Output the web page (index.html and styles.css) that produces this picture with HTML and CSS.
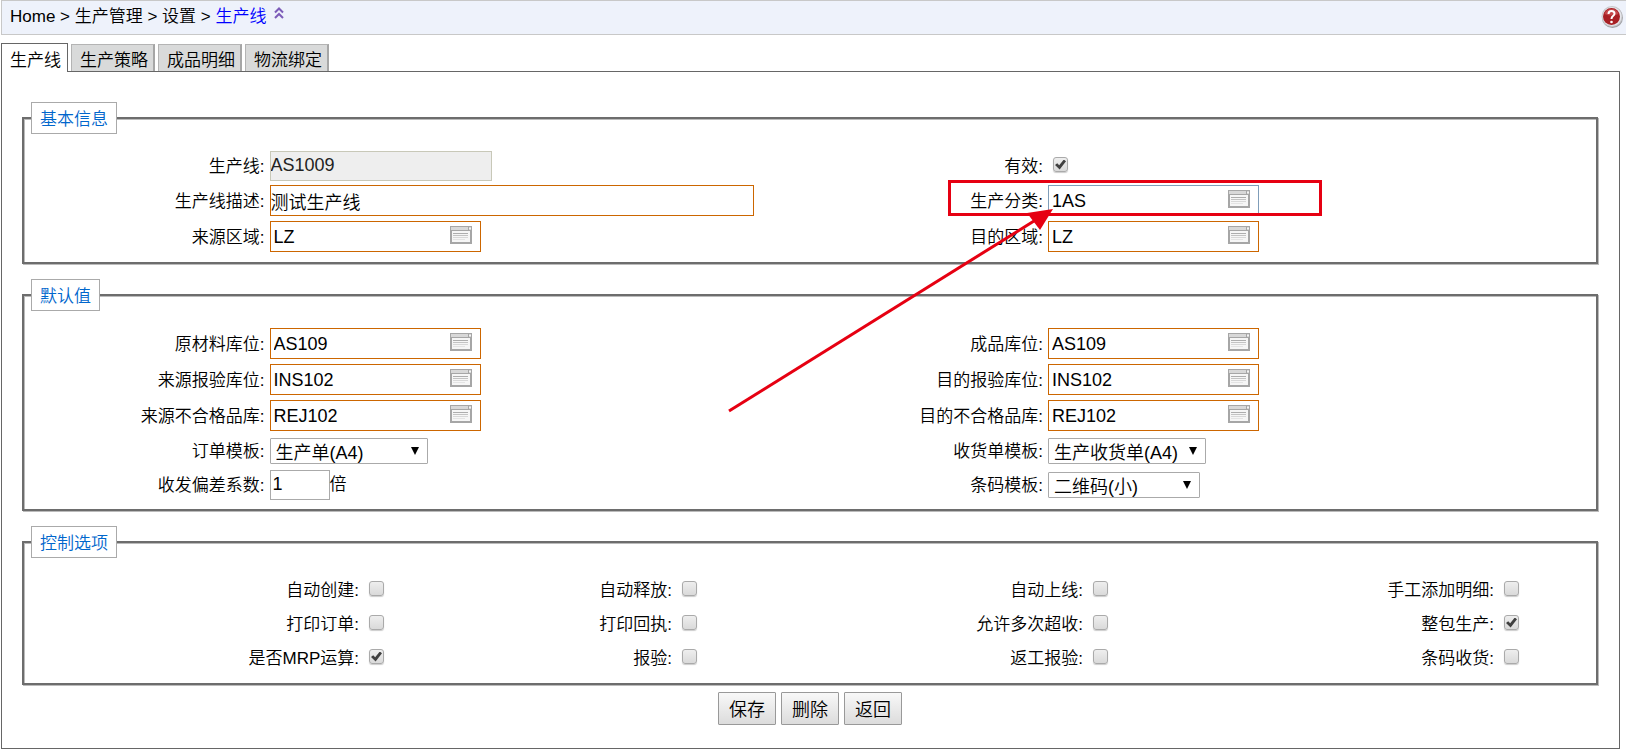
FILE: index.html
```html
<!DOCTYPE html>
<html lang="zh-CN">
<head>
<meta charset="utf-8">
<title>生产线</title>
<link rel="stylesheet" href="styles.css">
</head>
<body>
<svg class="symbols" aria-hidden="true">
  <symbol id="picker" viewBox="0 0 22 18">
    <rect x="0" y="0" width="22" height="18" fill="#a6a6a6"/>
    <rect x="1" y="1" width="20" height="3" fill="#d8d8d8"/>
    <rect x="18" y="1" width="1" height="3" fill="#a6a6a6"/>
    <rect x="19" y="2" width="2" height="1" fill="#f4f4f4"/>
    <rect x="2" y="5" width="18" height="11" fill="#f6f6f6"/>
    <rect x="3" y="7" width="15" height="1" fill="#adadad"/>
    <rect x="3" y="9" width="15" height="1" fill="#c3c3c3"/>
    <rect x="3" y="11" width="15" height="1" fill="#d8d8d8"/>
    <rect x="3" y="13" width="12" height="1" fill="#e4e4e4"/>
  </symbol>
  <symbol id="arrow-down" viewBox="0 0 8 8"><path d="M0 0h8L4 8z" fill="#000"/></symbol>
</svg>

<header class="topbar">
  <nav class="crumbs">
    <span>Home &gt; 生产管理 &gt; 设置 &gt; <a class="current" href="#">生产线</a></span>
    <button class="icon-button collapse" type="button" aria-label="收起">
      <svg width="10" height="12" viewBox="0 0 10 12" fill="none" stroke="#7c5cb8" stroke-width="2"><path d="M1 5.5L5 1.5l4 4M1 11l4-4 4 4"/></svg>
    </button>
  </nav>
  <button class="icon-button" type="button" aria-label="帮助">
    <svg width="22" height="22" viewBox="0 0 22 22">
      <circle cx="11.500" cy="11.500" r="10.500" fill="#a0a0a4"/>
      <circle cx="11" cy="10.500" r="10.500" fill="#c6c6ca"/>
      <circle cx="11" cy="10.500" r="9.500" fill="#e6e6ea"/>
      <circle cx="10.500" cy="10.500" r="8.500" fill="#a82025"/>
      <path d="M3.500 8a7.200 6.500 0 0 1 14 0q-7 3-14 0z" fill="#c4474a"/>
      <path d="M7.500 8q0-3 3-3t3 2.500q0 1.500-1.500 2.500t-1.500 3" fill="none" stroke="#fff" stroke-width="2"/>
      <circle cx="10.500" cy="16" r="1.300" fill="#fff"/>
    </svg>
  </button>
</header>

<nav class="tabs">
  <button class="tab active" type="button">生产线</button>
  <button class="tab" type="button">生产策略</button>
  <button class="tab" type="button">成品明细</button>
  <button class="tab" type="button">物流绑定</button>
</nav>

<form class="panel">
  <fieldset class="group">
    <legend>基本信息</legend>
    <div class="fields">
      <label class="check-row" for="line">生产线:</label>
      <div class="value check-row"><input class="text code" id="line" value="AS1009" readonly></div>
      <label class="check-row" for="valid">有效:</label>
      <div class="value check-row"><input class="check" type="checkbox" id="valid" checked></div>

      <label for="desc">生产线描述:</label>
      <div class="value"><input class="text wide" id="desc" value="测试生产线"></div>
      <label for="kind">生产分类:</label>
      <div class="value marked">
        <div class="combo plain"><input id="kind" value="1AS"><button type="button" aria-label="选择"><svg width="22" height="18"><use href="#picker"/></svg></button></div>
        <div class="mark-box"></div>
        <svg class="mark-arrow" width="326" height="206" viewBox="0 0 326 206"><path d="M1 203L306 13" stroke="#e60012" stroke-width="3"/><path d="M325 1L299 5l13 17z" fill="#e60012"/></svg>
      </div>

      <label for="from">来源区域:</label>
      <div class="value"><div class="combo"><input id="from" value="LZ"><button type="button" aria-label="选择"><svg width="22" height="18"><use href="#picker"/></svg></button></div></div>
      <label for="to">目的区域:</label>
      <div class="value"><div class="combo"><input id="to" value="LZ"><button type="button" aria-label="选择"><svg width="22" height="18"><use href="#picker"/></svg></button></div></div>
    </div>
  </fieldset>

  <fieldset class="group">
    <legend>默认值</legend>
    <div class="fields">
      <label for="raw">原材料库位:</label>
      <div class="value"><div class="combo"><input id="raw" value="AS109"><button type="button" aria-label="选择"><svg width="22" height="18"><use href="#picker"/></svg></button></div></div>
      <label for="goods">成品库位:</label>
      <div class="value"><div class="combo"><input id="goods" value="AS109"><button type="button" aria-label="选择"><svg width="22" height="18"><use href="#picker"/></svg></button></div></div>

      <label for="ins-from">来源报验库位:</label>
      <div class="value"><div class="combo"><input id="ins-from" value="INS102"><button type="button" aria-label="选择"><svg width="22" height="18"><use href="#picker"/></svg></button></div></div>
      <label for="ins-to">目的报验库位:</label>
      <div class="value"><div class="combo"><input id="ins-to" value="INS102"><button type="button" aria-label="选择"><svg width="22" height="18"><use href="#picker"/></svg></button></div></div>

      <label for="rej-from">来源不合格品库:</label>
      <div class="value"><div class="combo"><input id="rej-from" value="REJ102"><button type="button" aria-label="选择"><svg width="22" height="18"><use href="#picker"/></svg></button></div></div>
      <label for="rej-to">目的不合格品库:</label>
      <div class="value"><div class="combo"><input id="rej-to" value="REJ102"><button type="button" aria-label="选择"><svg width="22" height="18"><use href="#picker"/></svg></button></div></div>

      <label class="check-row" for="order-tpl">订单模板:</label>
      <div class="value check-row"><span class="select"><select id="order-tpl"><option>生产单(A4)</option></select><svg width="8" height="8"><use href="#arrow-down"/></svg></span></div>
      <label class="check-row" for="receipt-tpl">收货单模板:</label>
      <div class="value check-row"><span class="select"><select id="receipt-tpl"><option>生产收货单(A4)</option></select><svg width="8" height="8"><use href="#arrow-down"/></svg></span></div>

      <label class="check-row" for="ratio">收发偏差系数:</label>
      <div class="value check-row"><input class="text number" id="ratio" value="1"><span>倍</span></div>
      <label class="check-row" for="code-tpl">条码模板:</label>
      <div class="value check-row"><span class="select narrow"><select id="code-tpl"><option>二维码(小)</option></select><svg width="8" height="8"><use href="#arrow-down"/></svg></span></div>
    </div>
  </fieldset>

  <fieldset class="group">
    <legend>控制选项</legend>
    <div class="options">
      <label>自动创建:<input class="check" type="checkbox"></label>
      <label>自动释放:<input class="check" type="checkbox"></label>
      <label>自动上线:<input class="check" type="checkbox"></label>
      <label>手工添加明细:<input class="check" type="checkbox"></label>
      <label class="first">打印订单:<input class="check" type="checkbox"></label>
      <label>打印回执:<input class="check" type="checkbox"></label>
      <label>允许多次超收:<input class="check" type="checkbox"></label>
      <label>整包生产:<input class="check" type="checkbox" checked></label>
      <label class="first">是否MRP运算:<input class="check" type="checkbox" checked></label>
      <label>报验:<input class="check" type="checkbox"></label>
      <label>返工报验:<input class="check" type="checkbox"></label>
      <label>条码收货:<input class="check" type="checkbox"></label>
    </div>
  </fieldset>

  <div class="actions">
    <button type="button">保存</button>
    <button type="button">删除</button>
    <button type="button">返回</button>
  </div>
</form>
</body>
</html>
```

FILE: styles.css
```css
* { box-sizing: border-box; }

body {
  margin: 0;
  background: #fff;
  color: #000;
  font: 350 17px/24px "Liberation Sans", "Noto Sans CJK SC", sans-serif;
}

button, input, select { font: inherit; color: inherit; }

.symbols { position: absolute; width: 0; height: 0; }

.topbar {
  display: flex;
  align-items: center;
  justify-content: space-between;
  height: 35px;
  margin-left: 1px;
  padding: 0 3px 1px 8px;
  border: 1px solid #c8c8c8;
  border-right: 0;
  background: #eef2fb;
}

.crumbs { display: flex; align-items: center; gap: 8px; }
.current { color: #00f; text-decoration: none; }

.icon-button {
  display: flex;
  padding: 0;
  border: 0;
  background: none;
}

.collapse { padding-bottom: 8px; }

.tabs {
  display: flex;
  align-items: flex-end;
  gap: 3px;
  height: 36px;
  margin-left: 1px;
}

.tab {
  height: 27px;
  padding: 5px 5px 0 8px;
  border: 1px solid #b4b4b4;
  border-right: 2px solid #a6a6a6;
  border-bottom: 0;
  background: #d9dada;
  line-height: 22px;
}

.tab.active {
  z-index: 1;
  height: 29px;
  margin-bottom: -1px;
  padding: 5px 6px 0 8px;
  border: 1px solid #666;
  border-bottom: 0;
  background: #fff;
}

.panel {
  margin: 0 6px 0 1px;
  padding: 30px 21px 23px 20px;
  border: 1px solid #666;
}

.group {
  margin: 0 0 15px;
  padding: 15px 8px 7px 7px;
  border: 2px solid #6d6d6d;
  box-shadow: 1px 1px 0 #bbb, inset 1px 1px 0 #bbb;
}

.group:last-of-type { margin-bottom: 7px; padding-bottom: 8px; }

legend {
  height: 32px;
  padding: 5px 8px 1px;
  border: 1px solid #aaa;
  background: #fff;
  color: #06c;
}

.fields {
  display: grid;
  grid-template-columns: 15% 35% 15% 35%;
}

.fields > * {
  display: flex;
  align-items: center;
  height: 36px;
}

.fields > .check-row { height: 34px; }
.fields > label { justify-content: flex-end; padding-top: 2px; }
.fields > .value { padding: 0 0 1px 5px; }

.text {
  height: 30px;
  padding: 0;
  border: 1px solid #aaa;
  background: #fff;
  font-size: 18px;
}

.code {
  width: 222px;
  border-color: #c8c8b8;
  background: #eee;
  color: #222;
}

.wide { width: 484px; height: 31px; border-color: #c60; }
.number { width: 60px; padding: 0 2px; }

.combo {
  display: flex;
  align-items: center;
  width: 211px;
  height: 31px;
  border: 1px solid #c60;
  background: #fff;
}

.combo.plain { border-color: #7f9db9; }

.combo input {
  flex: 1;
  min-width: 0;
  padding: 0 3px;
  border: 0;
  background: none;
  font-size: 18px;
}

.combo button {
  display: flex;
  padding: 0 8px 3px 0;
  border: 0;
  background: none;
}

.select {
  display: flex;
  align-items: center;
  width: 158px;
  height: 26px;
  border: 1px solid #aaa;
  border-radius: 1px;
  padding-right: 8px;
}

.select.narrow { width: 152px; }

.select select {
  flex: 1;
  min-width: 0;
  height: 24px;
  margin-right: -16px;
  padding: 2px 0 0 5px;
  border: 0;
  background: none;
  appearance: none;
  font-size: 18px;
}

.select svg { margin-left: 8px; }

.check {
  display: grid;
  place-items: center;
  width: 15px;
  height: 15px;
  margin: 0 0 5px;
  appearance: none;
  border: 1px solid #aaa;
  border-radius: 3px;
  background: linear-gradient(#eee, #dadada);
  box-shadow: 0 1px 1px #ccc;
}

.value > .check { margin: 0 0 2px 5px; }

.check:checked::before {
  content: "";
  width: 11px;
  height: 10px;
  background: #404040;
  clip-path: polygon(0 55%, 20% 38%, 38% 58%, 80% 0, 100% 18%, 42% 100%);
}

.options {
  display: grid;
  grid-template-columns: 353fr 313fr 411fr 411fr 69fr;
}

.options label {
  display: flex;
  align-items: center;
  justify-content: flex-end;
  gap: 10px;
  height: 34px;
  padding-top: 2px;
}

.options .first { grid-column: 1; }

.marked { position: relative; }

.mark-box {
  position: absolute;
  top: -3px;
  left: -95px;
  width: 374px;
  height: 36px;
  border: 3px solid #e60012;
  pointer-events: none;
}

.mark-arrow {
  position: absolute;
  top: 25px;
  left: -315px;
  pointer-events: none;
}

.actions {
  display: flex;
  justify-content: center;
  gap: 5px;
}

.actions button {
  height: 33px;
  padding: 2px 10px 0;
  border: 1px solid #999;
  border-radius: 1px;
  background: linear-gradient(#f8f8f8, #dcdcdc);
  font-size: 18px;
}
```
